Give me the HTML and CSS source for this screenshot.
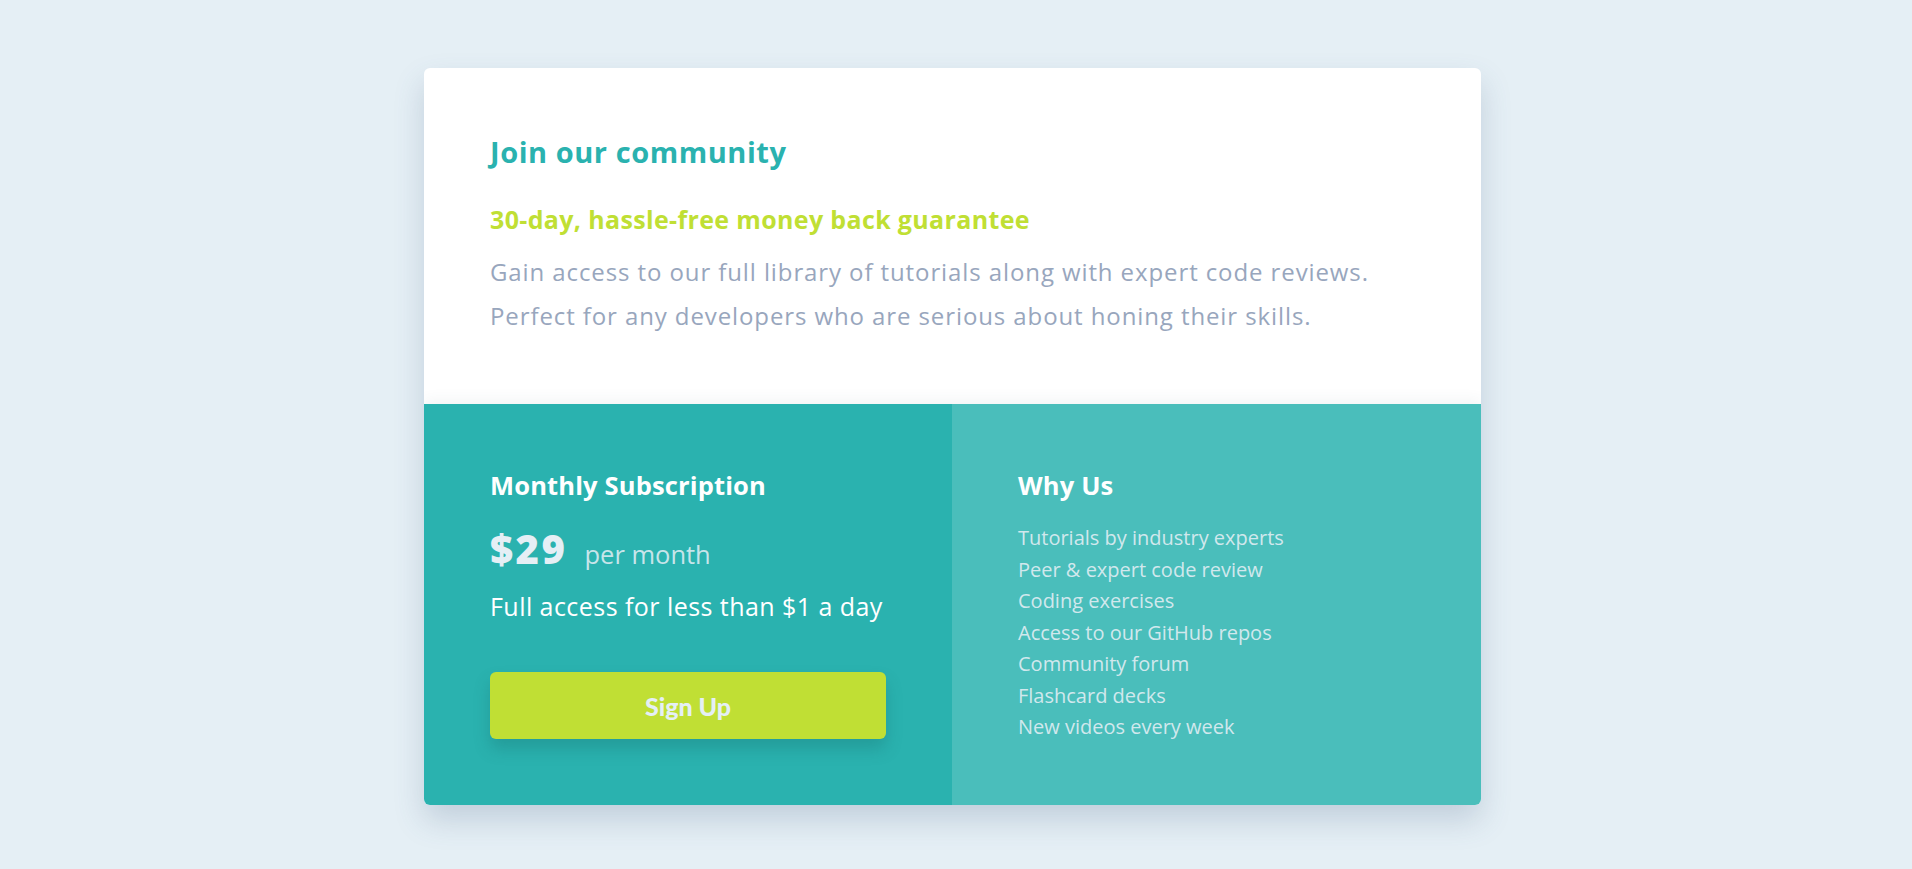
FILE: index.html
```html
<!DOCTYPE html>
<html lang="en">
<head>
<meta charset="utf-8">
<title>Single price grid component</title>
<link rel="stylesheet" href="styles.css">
</head>
<body>
  <main class="card">
    <section class="intro">
      <h1 class="intro-title">Join our community</h1>
      <h2 class="intro-sub">30-day, hassle-free money back guarantee</h2>
      <p class="intro-text">Gain access to our full library of tutorials along with expert code reviews. Perfect for any developers who are serious about honing their skills.</p>
    </section>
    <div class="bottom">
      <section class="sub">
        <h3 class="col-title">Monthly Subscription</h3>
        <div class="price-row">
          <span class="price">$29</span>
          <span class="per">per month</span>
        </div>
        <p class="access">Full access for less than $1 a day</p>
        <button class="signup" type="button">Sign Up</button>
      </section>
      <section class="why">
        <h3 class="col-title">Why Us</h3>
        <ul class="why-list">
          <li>Tutorials by industry experts</li>
          <li>Peer &amp; expert code review</li>
          <li>Coding exercises</li>
          <li>Access to our GitHub repos</li>
          <li>Community forum</li>
          <li>Flashcard decks</li>
          <li>New videos every week</li>
        </ul>
      </section>
    </div>
  </main>
</body>
</html>
```
FILE: styles.css
```css
* {
  box-sizing: border-box;
}

html, body {
  margin: 0;
  padding: 0;
}

body {
  background: #e5eff5;
  font-family: "Open Sans", "Noto Sans", sans-serif;
  min-height: 869px;
  padding-top: 68px;
}

.card {
  width: 1057px;
  margin-left: 424px;
  background: #ffffff;
  border-radius: 6px;
  overflow: hidden;
  box-shadow: 0 15px 30px rgba(70, 95, 130, 0.22);
}

.intro {
  height: 336px;
  padding: 66px 66px 0 66px;
}

.intro-title {
  margin: 0;
  font-size: 29px;
  line-height: 36px;
  font-weight: 700;
  letter-spacing: 0.55px;
  color: #2ab2af;
}

.intro-sub {
  margin: 33px 0 0;
  font-size: 25px;
  line-height: 32px;
  font-weight: 700;
  letter-spacing: 0.35px;
  color: #c0df34;
}

.intro-text {
  margin: 15px 0 0;
  font-size: 24px;
  line-height: 44px;
  font-weight: 400;
  letter-spacing: 0.9px;
  color: #98a6bd;
}

.bottom {
  display: grid;
  grid-template-columns: 528px 529px;
  height: 401px;
  box-shadow: 0 -3px 14px rgba(60, 80, 100, 0.07);
}

.sub {
  background: #2ab2af;
  padding: 64px 66px 0 66px;
}

.why {
  background: #4abebb;
  padding: 64px 66px 0 66px;
}

.col-title {
  margin: 0;
  font-size: 25.5px;
  line-height: 34px;
  font-weight: 700;
  letter-spacing: 0.15px;
  color: #ffffff;
}

.price-row {
  display: flex;
  align-items: baseline;
  gap: 17px;
  margin-top: 25px;
  height: 44px;
}

.price {
  font-size: 40px;
  line-height: 44px;
  font-weight: 800;
  letter-spacing: 2.5px;
  color: #e5eff5;
}

.per {
  font-size: 25.5px;
  line-height: 32px;
  color: rgba(229, 239, 245, 0.85);
}

.access {
  margin: 19px 0 0;
  font-size: 25px;
  line-height: 32px;
  letter-spacing: 0.45px;
  white-space: nowrap;
  color: #ffffff;
}

.signup {
  display: block;
  width: 100%;
  height: 67px;
  margin-top: 50px;
  border: 0;
  border-radius: 6px;
  background: #c0df34;
  color: #e5eff5;
  font-family: "Lato", sans-serif;
  font-weight: 900;
  font-size: 25px;
  box-shadow: 0 10px 16px rgba(20, 100, 100, 0.28);
  cursor: pointer;
}

.why-list {
  list-style: none;
  margin: 20px 0 0;
  padding: 0;
  font-size: 20px;
  line-height: 31.5px;
  color: rgba(229, 239, 245, 0.88);
}
```
